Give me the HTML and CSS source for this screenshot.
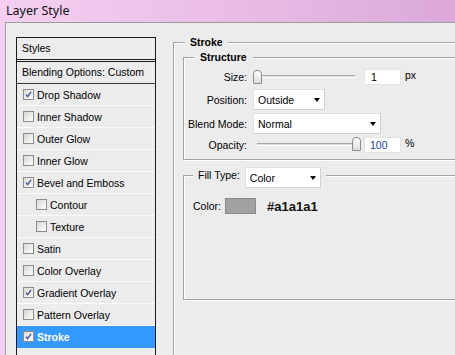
FILE: index.html
```
<!DOCTYPE html>
<html lang="en">
  <head>
    <meta charset="UTF-8" />
    <title>Layer Style</title>
    <link rel="stylesheet" href="styles.css">
  </head>
  <body>
    <div class="titlebar">Layer Style</div>

    <div class="window">
      <div class="style-list">
        <div class="list-head">Styles</div>
        <div class="list-blend">Blending Options: Custom</div>

        <div class="fx-row"><span class="cb on"><svg viewBox="0 0 11 11"><path d="M2.3 5.6 4.4 8.2 8.7 2.4" /></svg></span>Drop Shadow</div>
        <div class="fx-row"><span class="cb"></span>Inner Shadow</div>
        <div class="fx-row"><span class="cb"></span>Outer Glow</div>
        <div class="fx-row"><span class="cb"></span>Inner Glow</div>
        <div class="fx-row"><span class="cb on"><svg viewBox="0 0 11 11"><path d="M2.3 5.6 4.4 8.2 8.7 2.4" /></svg></span>Bevel and Emboss</div>
        <div class="fx-row sub"><span class="cb"></span>Contour</div>
        <div class="fx-row sub"><span class="cb"></span>Texture</div>
        <div class="fx-row"><span class="cb"></span>Satin</div>
        <div class="fx-row"><span class="cb"></span>Color Overlay</div>
        <div class="fx-row"><span class="cb on"><svg viewBox="0 0 11 11"><path d="M2.3 5.6 4.4 8.2 8.7 2.4" /></svg></span>Gradient Overlay</div>
        <div class="fx-row"><span class="cb"></span>Pattern Overlay</div>
        <div class="fx-row selected"><span class="cb on"><svg viewBox="0 0 11 11"><path d="M2.3 5.6 4.4 8.2 8.7 2.4" /></svg></span>Stroke</div>
      </div>

      <fieldset class="group stroke-group">
        <legend class="legend-bold stroke-legend">Stroke</legend>

        <fieldset class="group structure">
          <legend class="legend-bold structure-legend">Structure</legend>

          <div class="prop-row size-row">
            <div class="prop-label">Size:</div>
            <div class="slider">
              <div class="track"></div>
              <div class="thumb thumb-min"></div>
            </div>
            <div class="num-input">1</div>
            <div class="unit">px</div>
          </div>

          <div class="prop-row position-row">
            <div class="prop-label">Position:</div>
            <div class="dropdown w-position"><span>Outside</span><i class="arrow"></i></div>
          </div>

          <div class="prop-row blend-row">
            <div class="prop-label">Blend Mode:</div>
            <div class="dropdown w-blend"><span>Normal</span><i class="arrow"></i></div>
          </div>

          <div class="prop-row opacity-row">
            <div class="prop-label">Opacity:</div>
            <div class="slider">
              <div class="track track-short"></div>
              <div class="thumb thumb-max"></div>
            </div>
            <div class="num-input blue">100</div>
            <div class="unit">%</div>
          </div>
        </fieldset>

        <fieldset class="group fill">
          <legend class="fill-legend">
            <span class="fill-label">Fill Type:</span>
            <div class="dropdown w-fill"><span>Color</span><i class="arrow"></i></div>
          </legend>

          <div class="color-row">
            <span class="color-label">Color:</span>
            <span class="swatch"></span>
            <span class="hex">#a1a1a1</span>
          </div>
        </fieldset>
      </fieldset>
    </div>
  </body>
</html>
```

FILE: styles.css
```
* {
  margin: 0;
  padding: 0;
  box-sizing: border-box;
}

html,
body {
  height: 100%;
  overflow: hidden;
}

body {
  background: linear-gradient(90deg, #f4cff1 0%, #ebbfe7 45%, #dba8d8 100%);
  font-family: "Liberation Sans", Arial, sans-serif;
  font-size: 10.5px;
  color: #000;
}

/* title bar */
.titlebar {
  height: 22px;
  padding-left: 6px;
  font-family: "Noto Sans", "Liberation Sans", sans-serif;
  font-size: 12.5px;
  line-height: 21px;
  color: #111;
}

.window {
  display: flex;
  align-items: stretch;
  width: 520px;
  height: 345px;
  margin-left: 5px;
  padding: 14px 0 0 10px;
  background: #ececec;
  border-top: 1px solid #9c9c9c;
  border-left: 1px solid #9c9c9c;
}

/* styles list */
.style-list {
  width: 140px;
  flex-shrink: 0;
  border: 1px solid #1c1c1c;
  border-bottom: none;
  background: #ececec;
}

.list-head,
.list-blend {
  height: 21px;
  line-height: 21px;
  padding-left: 5px;
}

.list-head {
  height: 24px;
  border-bottom: 3px double #1c1c1c;
}

.list-blend {
  height: 22px;
  border-bottom: 1px solid #3a3a3a;
}

.fx-row {
  display: flex;
  align-items: center;
  height: 22px;
  padding-left: 6px;
  border-bottom: 1px solid #fbfbfb;
}

.fx-row.sub {
  padding-left: 19px;
}

.fx-row.selected {
  background: #3399ff;
  color: #fff;
  font-weight: bold;
  border-bottom-color: #3399ff;
}

.cb {
  width: 11px;
  height: 11px;
  margin-right: 3px;
  border: 1px solid #8b8d8f;
  background: linear-gradient(135deg, #d6d6d2 0%, #efefec 60%, #fdfdfd 100%);
  flex-shrink: 0;
}

.cb svg {
  display: block;
  width: 9px;
  height: 9px;
}

.cb svg path {
  fill: none;
  stroke: #3e4f96;
  stroke-width: 1.6;
}

.selected .cb {
  background: linear-gradient(135deg, #dcdcdc, #ffffff);
}

/* group boxes, cut off by the window's right edge */
.group {
  min-width: 0;
  border: 1px solid #a2a2a2;
  border-right: none;
  box-shadow: inset 1px 1px 0 #fff, 0 1px 0 #fff;
}

.group legend {
  background: #ececec;
}

.legend-bold {
  font-weight: bold;
  line-height: 14px;
}

.stroke-group {
  flex: 1;
  margin: -2px 0 0 17px;
  padding: 0 0 0 9px;
}

.stroke-legend {
  margin-left: 2px;
  padding: 0 5px;
}

.structure,
.fill {
  width: 330px;
}

.structure {
  margin-top: 1px;
  padding: 0 0 6px 4px;
}

.structure-legend {
  margin-left: 6px;
  padding: 0 6px;
}

.prop-row {
  display: flex;
  align-items: center;
}

.size-row {
  height: 16px;
  margin-top: 5px;
}

.position-row {
  margin-top: 4px;
}

.blend-row {
  margin-top: 3px;
}

.opacity-row {
  height: 16px;
  margin-top: 3px;
}

.prop-label {
  width: 59px;
  margin-right: 6px;
  text-align: right;
  white-space: nowrap;
}

.slider {
  position: relative;
  width: 102px;
  height: 16px;
}

.track {
  position: absolute;
  left: 0;
  right: 0;
  top: 6px;
  height: 3px;
  border-top: 1px solid #a8a8a8;
  border-bottom: 1px solid #fff;
  background: #dcdcdc;
}

.track-short {
  left: 4px;
}

.thumb {
  position: absolute;
  top: 1px;
  width: 9px;
  height: 14px;
  border: 1px solid #8c8c8c;
  border-radius: 4px 4px 1px 1px;
  background: linear-gradient(#ffffff, #dedede);
}

.thumb-min {
  left: 0;
}

.thumb-max {
  left: 99px;
  top: 0;
}

.num-input {
  width: 37px;
  height: 16px;
  margin-left: 9px;
  padding-left: 6px;
  line-height: 15px;
  background: #fff;
  border: 1px solid #e3e3e3;
}

.num-input.blue {
  padding-left: 5px;
  color: #163f9a;
}

.unit {
  align-self: flex-start;
  margin-left: 4px;
  line-height: 12px;
}

.dropdown {
  display: flex;
  align-items: center;
  justify-content: space-between;
  height: 21px;
  padding: 0 4px;
  background: #fff;
  border: 1px solid #e0e0e0;
  border-bottom-color: #d0d0d0;
  border-right-color: #d0d0d0;
  font-weight: normal;
}

.w-position {
  width: 72px;
}

.w-blend {
  width: 128px;
}

.w-fill {
  width: 76px;
  margin-left: 5px;
}

.arrow {
  width: 0;
  height: 0;
  margin-top: 1px;
  border-top: 4px solid #000;
  border-left: 3.5px solid transparent;
  border-right: 3.5px solid transparent;
}

/* fill type */
.fill {
  margin-top: 2px;
  padding: 0 0 85px 9px;
}

.fill-legend {
  display: flex;
  align-items: flex-start;
  padding: 5px 5px 0 0;
}

.fill-label {
  padding: 2px 0 0 5px;
  line-height: 13px;
}

.color-row {
  display: flex;
  align-items: center;
  height: 16px;
  margin-top: 10px;
}

.color-label {
  margin-right: 4px;
}

.swatch {
  width: 31px;
  height: 16px;
  margin-right: 11px;
  background: #a1a1a1;
  border: 1px solid #8a8a8a;
}

.hex {
  font-size: 13px;
  font-weight: bold;
  color: #111;
}
```
